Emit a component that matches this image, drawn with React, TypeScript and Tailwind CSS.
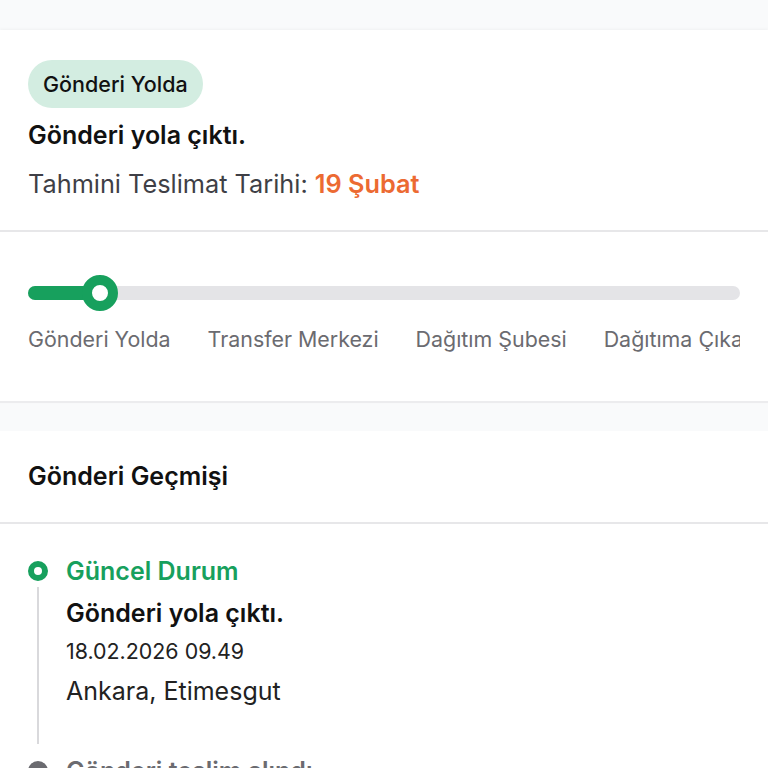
export default function App() {
  const steps = ['Gönderi Yolda', 'Transfer Merkezi', 'Dağıtım Şubesi', 'Dağıtıma Çıkarıldı', 'Teslim Edildi'];

  return (
    <div className="h-[768px] overflow-hidden bg-[#f9fafb] pt-[30px] font-['Inter',sans-serif]">
      {/* Status card */}
      <div className="bg-white shadow-[0_-1px_3px_rgba(0,0,0,0.04)] border-b-2 border-[#ececee]">
        <div className="px-7 pt-[30px] pb-[31px] border-b-2 border-[#e7e7e9]">
          <span className="inline-flex items-center h-[48px] px-[15px] rounded-full bg-[#d3ede1] text-[21.5px] font-medium text-[#111]">
            Gönderi Yolda
          </span>
          <div className="mt-[12px] text-[25px] font-semibold text-[#111] leading-[30px]">Gönderi yola çıktı.</div>
          <div className="mt-[19px] text-[25.3px] text-[#3f3f46] leading-[30px]">
            Tahmini Teslimat Tarihi: <span className="font-semibold text-[#ec6a32]">19 Şubat</span>
          </div>
        </div>

        <div className="px-7 pt-[41px] pb-[47px]">
          <div className="relative h-[40px] flex items-center">
            <div className="w-full h-[14px] rounded-full bg-[#e4e4e7]" />
            <div className="absolute left-0 top-[13px] h-[14px] w-[80px] rounded-full bg-[#17a05d]" />
            <div className="absolute left-[54px] top-[2px] w-[36px] h-[36px] rounded-full border-[10px] border-[#17a05d] bg-white" />
          </div>
          <div className="mt-[11px] overflow-hidden">
            <div className="flex gap-[37px] whitespace-nowrap text-[21.4px] leading-[30px] text-[#6b6b70]">
              {steps.map((s) => (
                <span key={s}>{s}</span>
              ))}
            </div>
          </div>
        </div>
      </div>

      {/* History */}
      <div className="mt-[28px] bg-white">
        <div className="px-7 h-[93px] flex items-center border-b-2 border-[#e7e7e9] text-[25px] font-semibold text-[#111]">
          Gönderi Geçmişi
        </div>
        <div className="px-7 pt-[31px]">
          <div className="flex">
            <div className="w-[20px] flex flex-col items-center">
              <div className="mt-[6px] w-[20px] h-[20px] rounded-full border-[6px] border-[#17a05d] bg-white" />
              <div className="mt-[6px] w-[2px] h-[157px] bg-[#d9d9dc]" />
            </div>
            <div className="ml-[18px]">
              <div className="text-[25px] font-semibold text-[#17a05d] leading-[32px]">Güncel Durum</div>
              <div className="mt-[11px] text-[25px] font-semibold text-[#111] leading-[30px]">Gönderi yola çıktı.</div>
              <div className="mt-[8px] text-[21.4px] text-[#222] leading-[30px]">18.02.2026 09.49</div>
              <div className="mt-[10px] text-[25px] text-[#222] leading-[30px]">Ankara, Etimesgut</div>
            </div>
          </div>
          <div className="flex">
            <div className="w-[20px] flex flex-col items-center">
              <div className="mt-[17px] w-[20px] h-[20px] rounded-full bg-[#6b6b70]" />
            </div>
            <div className="ml-[18px] mt-[11px] text-[25px] font-semibold text-[#6b6b70] leading-[32px]">
              Gönderi teslim alındı
            </div>
          </div>
        </div>
      </div>
    </div>
  );
}
